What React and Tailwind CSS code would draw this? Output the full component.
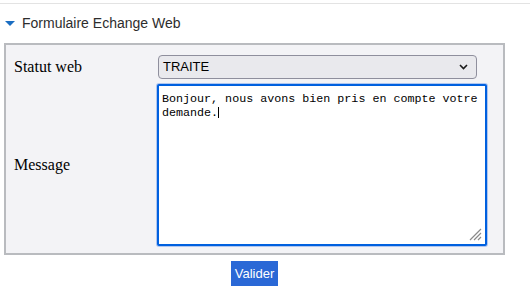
export default function App() {
  return (
    <div className="w-[530px] h-[302px] bg-white font-['Liberation_Sans',Arial,sans-serif] overflow-hidden">
      {/* top rule */}
      <div className="h-px bg-[#e3e3e3] mt-[3px]" />

      {/* section title */}
      <div className="flex items-center h-[39px]">
        <svg width="10" height="5" viewBox="0 0 10 5" className="ml-[5px]">
          <polygon points="0,0 10,0 5,5" fill="#1b6ec2" />
        </svg>
        <span className="ml-[7px] text-[14px] text-[#2d2d2d]">Formulaire Echange Web</span>
      </div>

      {/* form panel */}
      <div className="ml-[4px] w-[501px] h-[212px] border-2 border-[#b9bbbf] bg-[#f3f3f6] pt-[10px] pb-[6px]">
        <div className="flex items-center h-[24px]">
          <div className="w-[150px] pl-[8px] font-['Liberation_Serif',serif] text-[16px] text-black">Statut web</div>
          <div className="ml-[2px] w-[319px] h-[24px] rounded-[4px] border border-[#8f8f9d] bg-[#e9e9ed] flex items-center justify-between pl-[4px] pr-[8px]">
            <span className="text-[13px] text-black">TRAITE</span>
            <svg width="9" height="6" viewBox="0 0 9 6">
              <path d="M1 1 L4.5 4.5 L8 1" fill="none" stroke="#1a1a1a" strokeWidth="1.6" />
            </svg>
          </div>
        </div>

        <div className="flex items-center mt-[4px] h-[164px]">
          <div className="w-[150px] pl-[8px] font-['Liberation_Serif',serif] text-[16px] text-black">Message</div>
          <div className="relative m-px w-[330px] h-[162px] border-2 border-[#0060df] rounded-[2px] bg-white shadow-[0_0_0_1px_#afc6f0] px-[3px] pt-[6px]">
            <p className="font-['Liberation_Mono',monospace] text-[11.7px] leading-[14px] text-black w-[320px]">
              Bonjour, nous avons bien pris en compte votre demande.
              <span className="inline-block w-px h-[11px] bg-black align-[-2px]" />
            </p>
            <svg width="14" height="14" viewBox="0 0 14 14" className="absolute right-[3px] bottom-[3px]">
              <path d="M13 2 L2 13 M13 6 L6 13 M13 10 L10 13" stroke="#8a8a8a" strokeWidth="1.2" />
            </svg>
          </div>
        </div>
      </div>

      {/* submit */}
      <div className="ml-[4px] w-[501px] flex justify-center mt-[6px]">
        <button className="w-[47px] h-[25px] bg-[#2a68d6] text-white text-[13px]">Valider</button>
      </div>
    </div>
  );
}
